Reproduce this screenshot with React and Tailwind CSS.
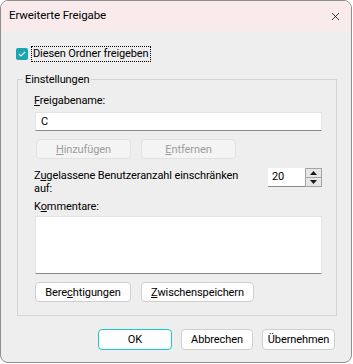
import { X } from "lucide-react";

const font = { fontFamily: 'Roboto, "Liberation Sans", sans-serif' };

function Btn({ children, className = "", disabled = false, primary = false }) {
  return (
    <button
      type="button"
      disabled={disabled}
      className={`h-[20px] rounded-[4px] border text-[11px] tracking-[-0.1px] leading-none flex items-center justify-center ${
        disabled
          ? "bg-[#f4f4f4] border-[#e2e2e2] text-[#9c9c9c]"
          : primary
          ? "bg-[#fdfdfd] border-[#1cc7c7] text-black"
          : "bg-[#fdfdfd] border-[#cfcfcf] text-black"
      } ${className}`}
    >
      {children}
    </button>
  );
}

function Spinner() {
  return (
    <div className="flex h-[19px] -mt-[1px]">
      <div className="w-[37px] bg-white border-b border-[#8a8a8a] pl-[4px] text-[11px] leading-[18px]">
        20
      </div>
      <div className="w-[17px] border border-[#a5a5a5] bg-[#e6e6e6] flex flex-col">
        <div className="flex-1 flex items-center justify-center border-b border-[#a5a5a5]">
          <svg width="7" height="4" viewBox="0 0 7 4">
            <path d="M3.5 0 L7 4 L0 4 Z" fill="#1a1a1a" />
          </svg>
        </div>
        <div className="flex-1 flex items-center justify-center">
          <svg width="7" height="4" viewBox="0 0 7 4">
            <path d="M0 0 L7 0 L3.5 4 Z" fill="#1a1a1a" />
          </svg>
        </div>
      </div>
    </div>
  );
}

export default function App() {
  return (
    <div className="w-[353px] h-[364px] bg-white tracking-[-0.1px]" style={font}>
      <div className="w-[352px] h-[363px] border border-[#8f8f8f] rounded-[8px] overflow-hidden flex flex-col bg-[#eeeeee] text-black">
        {/* Title bar */}
        <div className="h-[30px] bg-[#f9ebec] flex items-center justify-between pl-[8px] pr-[8px] shrink-0">
          <span className="text-[11.5px]">Erweiterte Freigabe</span>
          <X size={13} strokeWidth={1.4} className="mr-[1px]" />
        </div>

        {/* Share checkbox */}
        <div className="mt-[15px] h-[16px] pl-[15px] flex items-center">
          <div className="w-[12px] h-[12px] rounded-[2px] bg-[#1aa6b0] flex items-center justify-center">
            <svg width="8" height="6" viewBox="0 0 8 6">
              <path d="M0.8 3 L3 5 L7.2 0.8" stroke="white" strokeWidth="1.1" fill="none" />
            </svg>
          </div>
          <span className="ml-[3px] px-[1px] border border-dotted border-black text-[11px] leading-[14px]">
            Diesen Ordner freigeben
          </span>
        </div>

        {/* Settings group */}
        <fieldset className="mt-[10px] ml-[16px] w-[320px] border border-[#d4d4d4] p-0 pb-[13px]">
          <legend className="ml-[5px] px-[2px] text-[11px] leading-[15px]">Einstellungen</legend>
          <div className="pl-[17px] pr-[14px] flex flex-col text-[11px]">
            <div className="mt-[6px] leading-[15px] -ml-[1px]">
              <u>F</u>reigabename:
            </div>
            <div className="mt-[4px] h-[19px] bg-white border border-[#e4e4e4] border-b-[#8a8a8a] pl-[5px] leading-[17px]">
              C
            </div>
            <div className="mt-[8px] flex gap-[10px] pl-[1px]">
              <Btn disabled className="w-[95px]">
                <span><u>H</u>inzufügen</span>
              </Btn>
              <Btn disabled className="w-[95px]">
                <span><u>E</u>ntfernen</span>
              </Btn>
            </div>
            <div className="mt-[10px] flex items-start justify-between">
              <div className="w-[212px] leading-[13px] -ml-[1px]">
                Z<u>u</u>gelassene Benutzeranzahl einschränken auf:
              </div>
              <Spinner />
            </div>
            <div className="mt-[4px] leading-[15px] -ml-[1px]">
              K<u>o</u>mmentare:
            </div>
            <div className="mt-[2px] h-[58px] bg-white border border-[#e4e4e4] border-b-[#8a8a8a]" />
            <div className="mt-[8px] flex gap-[10px]">
              <Btn className="w-[96px]">
                <span>Bere<u>c</u>htigungen</span>
              </Btn>
              <Btn className="w-[113px]">
                <span><u>Z</u>wischenspeichern</span>
              </Btn>
            </div>
          </div>
        </fieldset>

        {/* Dialog buttons */}
        <div className="mt-[13px] flex justify-end gap-[9px] pr-[16px]">
          <Btn primary className="w-[74px] h-[21px]">OK</Btn>
          <Btn className="w-[72px] h-[21px]">Abbrechen</Btn>
          <Btn className="w-[73px] h-[21px]">Übernehmen</Btn>
        </div>
      </div>
    </div>
  );
}
